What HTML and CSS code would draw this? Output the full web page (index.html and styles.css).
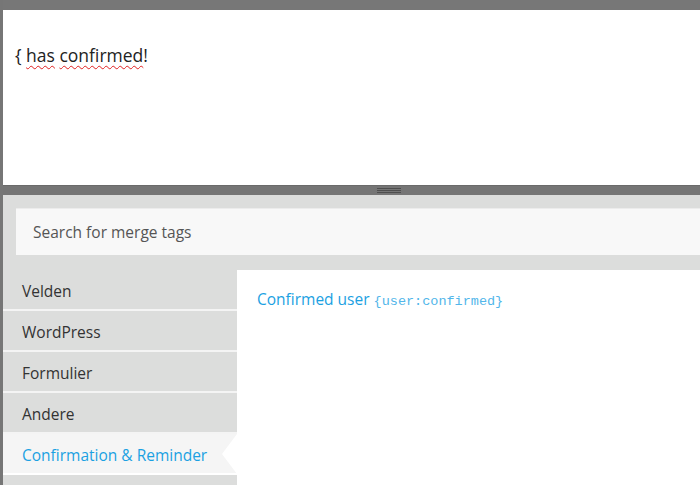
FILE: index.html
```html
<!DOCTYPE html>
<html>
<head>
<meta charset="utf-8">
<link rel="stylesheet" href="styles.css">
</head>
<body>
<div class="app">
  <div class="topbar"></div>
  <div class="editor">
    <p class="editor-text">{ <span class="typo">has</span> <span class="typo">confirmed</span>!</p>
  </div>
  <div class="divider"><div class="handle"></div></div>
  <div class="panel">
    <div class="search">Search for merge tags</div>
    <div class="body">
      <ul class="sidebar">
        <li class="item">Velden</li>
        <li class="item">WordPress</li>
        <li class="item">Formulier</li>
        <li class="item">Andere</li>
        <li class="item active">Confirmation &amp; Reminder</li>
        <li class="item"></li>
      </ul>
      <div class="content">
        <div class="tag"><span class="tag-name">Confirmed user</span> <code class="tag-code">{user:confirmed}</code></div>
      </div>
    </div>
  </div>
</div>
</body>
</html>
```
FILE: styles.css
```css
html, body {
  margin: 0;
  padding: 0;
  background: #ffffff;
}
body {
  font-family: "Open Sans", "Noto Sans", sans-serif;
  overflow: hidden;
}
.app {
  width: 697px;
  height: 485px;
  border-left: 3px solid #767676;
  display: flex;
  flex-direction: column;
  overflow: hidden;
}
.topbar {
  height: 10px;
  background: #777777;
  flex: none;
}
.editor {
  height: 175px;
  background: #ffffff;
  flex: none;
  padding: 0 12px;
  box-sizing: border-box;
}
.editor-text {
  margin: 0;
  padding-top: 33px;
  font-size: 17.5px;
  line-height: 24px;
  color: #222;
}
.typo {
  text-decoration: underline wavy #e02020;
  text-decoration-thickness: 1px;
  text-underline-offset: 3px;
}
.divider {
  height: 10px;
  flex: none;
  background: #757575;
  border-top: 1px solid #6a6a6a;
  box-sizing: border-box;
  display: flex;
  align-items: center;
  padding-left: 374px;
}
.handle {
  width: 24px;
  height: 5px;
  border-top: 1px solid #4e4e4e;
  border-bottom: 1px solid #4e4e4e;
  box-sizing: border-box;
  position: relative;
}
.handle::after {
  content: "";
  position: absolute;
  left: 0;
  right: 0;
  top: 1px;
  height: 1px;
  background: #4e4e4e;
}
.panel {
  flex: 1;
  background: #dcdddc;
  padding-top: 13px;
  display: flex;
  flex-direction: column;
  min-height: 0;
}
.search {
  margin-left: 13px;
  height: 47px;
  background: #f8f8f8;
  border-top: 1px solid #ececec;
  box-sizing: border-box;
  padding-left: 17px;
  display: flex;
  align-items: center;
  font-size: 15.5px;
  color: #555555;
  flex: none;
}
.body {
  margin-top: 15px;
  flex: 1;
  display: flex;
  min-height: 0;
  overflow: hidden;
}
.sidebar {
  list-style: none;
  margin: 0;
  padding: 0;
  width: 234px;
  flex: none;
}
.item {
  height: 37px;
  padding-top: 2px;
  padding-left: 19px;
  border-bottom: 2px solid #f4f4f4;
  box-sizing: content-box;
  background: #dcdddc;
  display: flex;
  align-items: center;
  font-size: 15.5px;
  line-height: 20px;
  color: #333333;
  position: relative;
}
.item.active {
  background: #f5f5f5;
  color: #1ba1e2;
  border-bottom-color: #ffffff;
}
.item.active::after {
  content: "";
  position: absolute;
  right: 0;
  top: 0;
  border-top: 20px solid transparent;
  border-bottom: 20px solid transparent;
  border-right: 15px solid #ffffff;
}
.content {
  flex: 1;
  background: #ffffff;
  padding: 18px 20px;
}
.tag {
  font-size: 15.5px;
  line-height: 22px;
}
.tag-name {
  color: #1ba1e2;
}
.tag-code {
  font-family: "Liberation Mono", monospace;
  font-size: 13.5px;
  color: #52b6ea;
}
```
